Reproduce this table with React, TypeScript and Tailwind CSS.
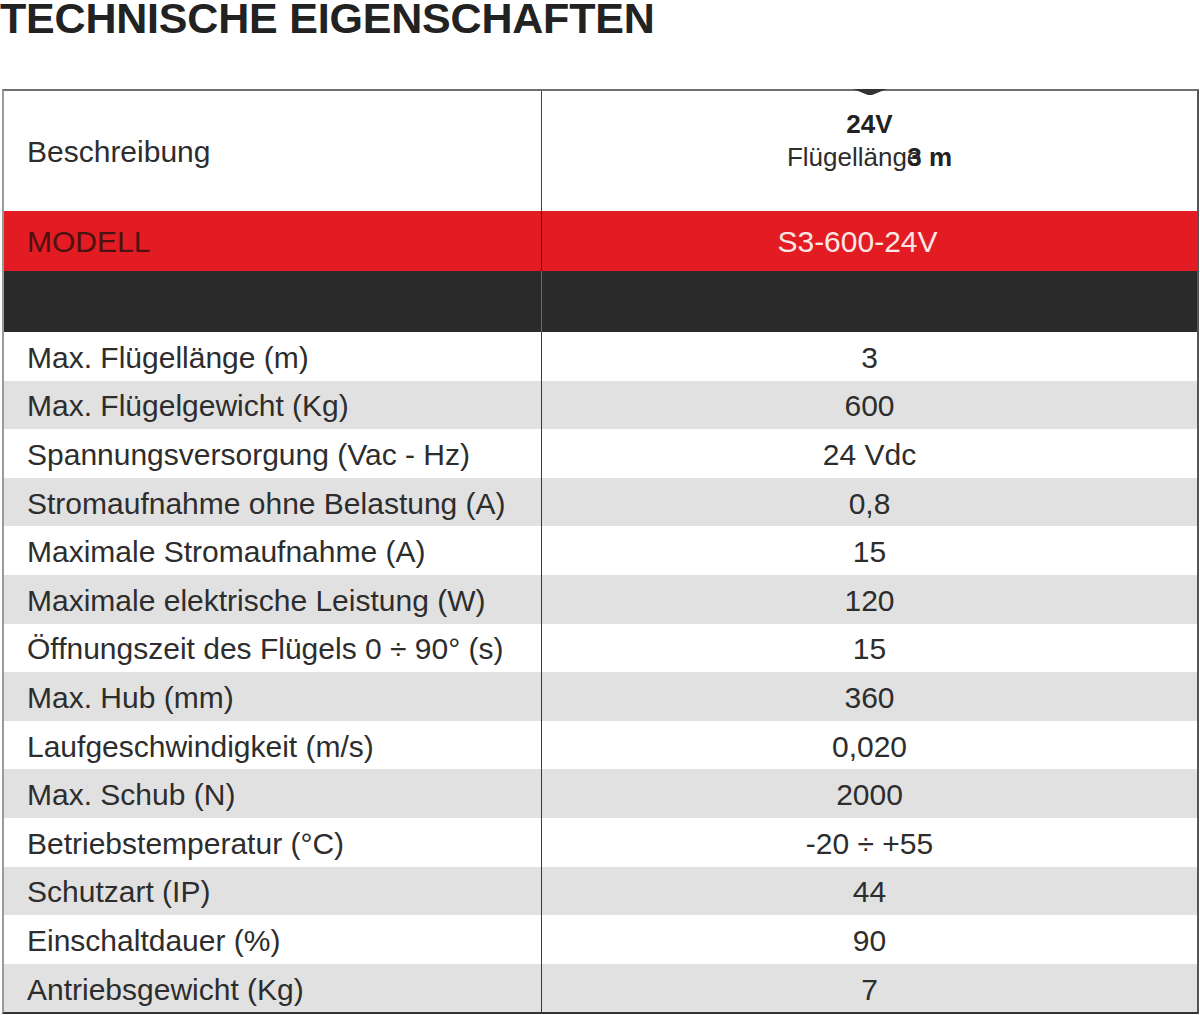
const ROWS: [string, string][] = [
  ['Max. Flügellänge (m)', '3'],
  ['Max. Flügelgewicht (Kg)', '600'],
  ['Spannungsversorgung (Vac - Hz)', '24 Vdc'],
  ['Stromaufnahme ohne Belastung (A)', '0,8'],
  ['Maximale Stromaufnahme (A)', '15'],
  ['Maximale elektrische Leistung (W)', '120'],
  ['Öffnungszeit des Flügels 0 ÷ 90° (s)', '15'],
  ['Max. Hub (mm)', '360'],
  ['Laufgeschwindigkeit (m/s)', '0,020'],
  ['Max. Schub (N)', '2000'],
  ['Betriebstemperatur (°C)', '-20 ÷ +55'],
  ['Schutzart (IP)', '44'],
  ['Einschaltdauer (%)', '90'],
  ['Antriebsgewicht (Kg)', '7'],
];

export default function App() {
  return (
    <div className="w-[1200px] h-[1015px] overflow-hidden bg-white text-[#2d2d2d] font-['Liberation_Sans',Arial,sans-serif]">
      <h1 className="text-[43px] leading-[36px] font-bold text-[#222] tracking-[-0.2px]">
        TECHNISCHE EIGENSCHAFTEN
      </h1>

      <div className="mt-[53px] ml-[2px] w-[1197px] border-2 border-t-[#707070] border-l-[#9a9a9a] border-r-[#555] border-b-[#333]">
        {/* header */}
        <div className="flex h-[120px]">
          <div className="w-[538px] border-r border-[#444] flex items-center pl-[23px] pt-[2px] text-[30px] leading-none">
            Beschreibung
          </div>
          <div className="relative flex-1 flex flex-col items-center pt-[18px] text-[26px] leading-[31px]">
            <svg
              className="absolute left-[311px] top-[-2px]"
              width="34"
              height="7"
              viewBox="0 0 34 7"
            >
              <path d="M0 0 H34 L19 6 H15 Z" fill="#333" />
            </svg>
            <span className="font-bold text-[#222]">24V</span>
            <span className="mt-[2px]">
              Flügellänge
              <span className="font-bold text-[#222] ml-[-14px]">3 m</span>
            </span>
          </div>
        </div>

        {/* model */}
        <div className="flex h-[60px] bg-[#e31b23] text-[30px] leading-none">
          <div className="w-[538px] border-r border-[#4a1414] flex items-center pl-[23px] pt-[2px] text-[#4a1212]">
            MODELL
          </div>
          <div className="flex-1 flex items-center justify-center pt-[2px] pr-[24px] text-[#fbe6e6]">
            S3-600-24V
          </div>
        </div>

        {/* black band */}
        <div className="flex h-[61px] bg-[#2a2a2a]">
          <div className="w-[538px] border-r border-[#6a6a6a]" />
          <div className="flex-1" />
        </div>

        {ROWS.map(([label, value], i) => (
          <div
            key={label}
            className={`flex h-[48.6px] text-[30px] leading-none ${i % 2 === 1 ? 'bg-[#e1e1e1]' : 'bg-white'}`}
          >
            <div className="w-[538px] border-r border-[#3a3a3a] flex items-center pl-[23px] pt-[3px]">
              {label}
            </div>
            <div className="flex-1 flex items-center justify-center pt-[3px]">{value}</div>
          </div>
        ))}
      </div>
    </div>
  );
}
